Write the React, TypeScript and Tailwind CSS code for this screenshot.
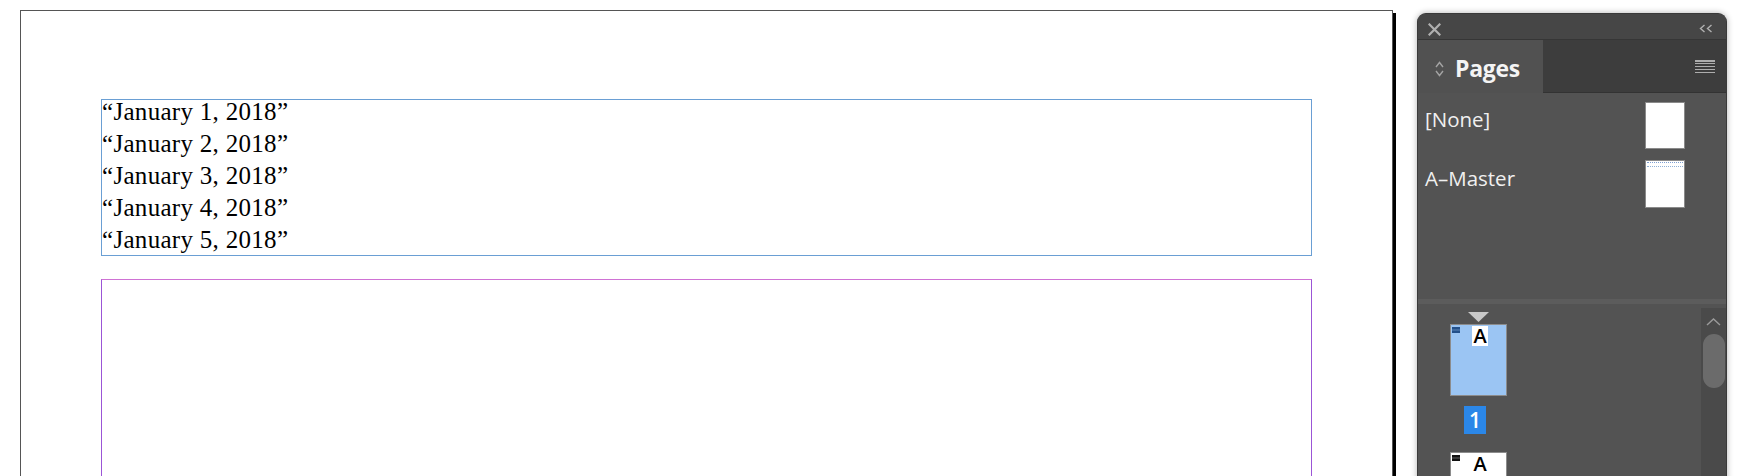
import React from "react";

const dates = ["January 1, 2018", "January 2, 2018", "January 3, 2018", "January 4, 2018", "January 5, 2018"];

function CloseIcon() {
	return (
		<svg width="13" height="13" viewBox="0 0 13 13" className="block">
			<path d="M1.5 1.5 L11.5 11.5 M11.5 1.5 L1.5 11.5" stroke="#b0b0b0" strokeWidth="2.2" strokeLinecap="square" />
		</svg>
	);
}

function CollapseIcon() {
	return (
		<svg width="14" height="9" viewBox="0 0 14 9" className="block">
			<path d="M5.5 1 L1.5 4.5 L5.5 8 M12.5 1 L8.5 4.5 L12.5 8" stroke="#b0b0b0" strokeWidth="1.4" fill="none" />
		</svg>
	);
}

function UpDownIcon() {
	return (
		<svg width="9" height="16" viewBox="0 0 9 16" className="block">
			<path d="M1 6 L4.5 1.5 L8 6 M1 10 L4.5 14.5 L8 10" stroke="#a3a3a3" strokeWidth="1.4" fill="none" />
		</svg>
	);
}

function MenuIcon() {
	return (
		<div className="flex flex-col gap-[1.3px] w-[20px]">
			<div className="h-[1.6px] bg-[#adadad]" />
			<div className="h-[1.6px] bg-[#adadad]" />
			<div className="h-[1.6px] bg-[#adadad]" />
			<div className="h-[1.6px] bg-[#adadad]" />
			<div className="h-[1.6px] bg-[#adadad]" />
		</div>
	);
}

function MasterBadge({ dark }: { dark?: boolean }) {
	return (
		<svg width="8" height="6" viewBox="0 0 8 6" className="absolute left-[1px] top-[2px]">
			<rect x="0" y="0" width="8" height="6" fill={dark ? "#111" : "#23508a"} />
			<rect x="0" y="2.6" width="8" height="0.8" fill={dark ? "#777" : "#6d95c4"} />
		</svg>
	);
}

function PageThumb({ selected }: { selected?: boolean }) {
	return (
		<div className={`relative w-[57px] h-[72px] border border-[#8c8c8c] ${selected ? "bg-[#9bc5f3]" : "bg-white"}`}>
			<MasterBadge dark={!selected} />
			<div className="ml-[21px] mt-[1px] w-[16px] h-[20px] bg-white flex items-center justify-center text-[20px] font-semibold text-black leading-none">
				A
			</div>
		</div>
	);
}

export default function App() {
	return (
		<div className="w-[1756px] h-[476px] overflow-hidden bg-white flex items-start">
			{/* canvas */}
			<div className="pl-[20px] pt-[10px] h-full">
				<div className="w-[1373px] h-[480px] border-l border-t border-r border-[#555] shadow-[3px_3px_0_#000] bg-white pl-[80px] pt-[88px]">
					<div className="w-[1211px] h-[157px] border border-[#6a9fd4]">
						<div className="-mt-[4px] font-['Liberation_Serif',serif] text-[25px] leading-[32px] tracking-[0.3px] text-black">
							{dates.map((d) => (
								<div key={d}>“{d}”</div>
							))}
						</div>
					</div>
					<div className="mt-[23px] w-[1211px] h-[300px] border-x border-t border-x-[#9b55d6] border-t-[#cf72d4]" />
				</div>
			</div>

			{/* pages panel */}
			<div className="ml-[24px] mt-[13px] w-[310px] h-[470px] rounded-t-[9px] overflow-hidden border-x border-t border-[#3a3a3a] shadow-[0_0_6px_rgba(0,0,0,0.3)] bg-[#535353] flex flex-col font-['Open_Sans',sans-serif]">
				<div className="shrink-0 h-[26px] bg-[#464646] border-b border-[#363636] flex items-start justify-between pl-[10px] pt-[9px] pr-[13px]">
					<CloseIcon />
					<div className="mt-[1px]">
						<CollapseIcon />
					</div>
				</div>

				<div className="shrink-0 h-[53px] flex bg-[#3d3d3d]">
					<div className="w-[125px] h-full bg-[#515151] flex items-start pl-[17px]">
						<div className="mt-[21px]">
							<UpDownIcon />
						</div>
						<span className="ml-[11px] mt-[17px] text-[23px] font-bold text-[#f4f4f4] leading-none tracking-[-0.3px]">Pages</span>
					</div>
					<div className="flex-1 flex justify-end items-start pt-[20px] pr-[11px] border-b border-[#333]">
						<MenuIcon />
					</div>
				</div>

				<div className="shrink-0 h-[206px] pt-[9px] flex flex-col">
					<div className="h-[58px] flex items-start justify-between pl-[7px] pr-[41px]">
						<span className="mt-[7px] text-[20.5px] leading-none text-[#f0f0f0]">[None]</span>
						<div className="w-[40px] h-[47px] bg-white border border-[#8a8a8a]" />
					</div>
					<div className="h-[58px] flex items-start justify-between pl-[7px] pr-[41px]">
						<span className="mt-[8px] text-[20.5px] leading-none text-[#f0f0f0]">A–Master</span>
						<div className="w-[40px] h-[48px] bg-white border border-[#8a8a8a] flex flex-col gap-[3px] pt-[1px] px-[1px]">
							<div className="border-t-[1.5px] border-dotted border-[#7f9fd0]" />
							<div className="border-t-[1.5px] border-dotted border-[#8fb0d6]" />
						</div>
					</div>
				</div>

				<div className="shrink-0 h-[5px] bg-[#5c5c5c]" />

				<div className="flex-1 min-h-0 overflow-hidden flex">
					<div className="flex-1 pl-[32px] pt-[8px]">
						<div className="w-[57px] flex flex-col items-center">
							<svg width="21" height="10" viewBox="0 0 21 10" className="block shrink-0">
								<path d="M0 0 L21 0 L10.5 10 Z" fill="#c9c9c9" />
							</svg>
							<div className="mt-[2px] shrink-0">
								<PageThumb selected />
							</div>
							<div className="shrink-0 self-start ml-[14px] mt-[10px] w-[22px] h-[28px] bg-[#2b87e8] flex items-center justify-center text-white text-[21px] font-semibold leading-none">
								1
							</div>
							<div className="mt-[18px] shrink-0">
								<PageThumb />
							</div>
						</div>
					</div>
					<div className="w-[25px] mt-[4px] bg-[#4a4a4a] flex flex-col items-center pt-[10px]">
						<svg width="15" height="8" viewBox="0 0 15 8" className="block">
							<path d="M1 7 L7.5 1 L14 7" stroke="#9a9a9a" strokeWidth="1.4" fill="none" />
						</svg>
						<div className="mt-[8px] w-[22px] h-[54px] rounded-full bg-[#6b6b6b]" />
					</div>
				</div>
			</div>
		</div>
	);
}
